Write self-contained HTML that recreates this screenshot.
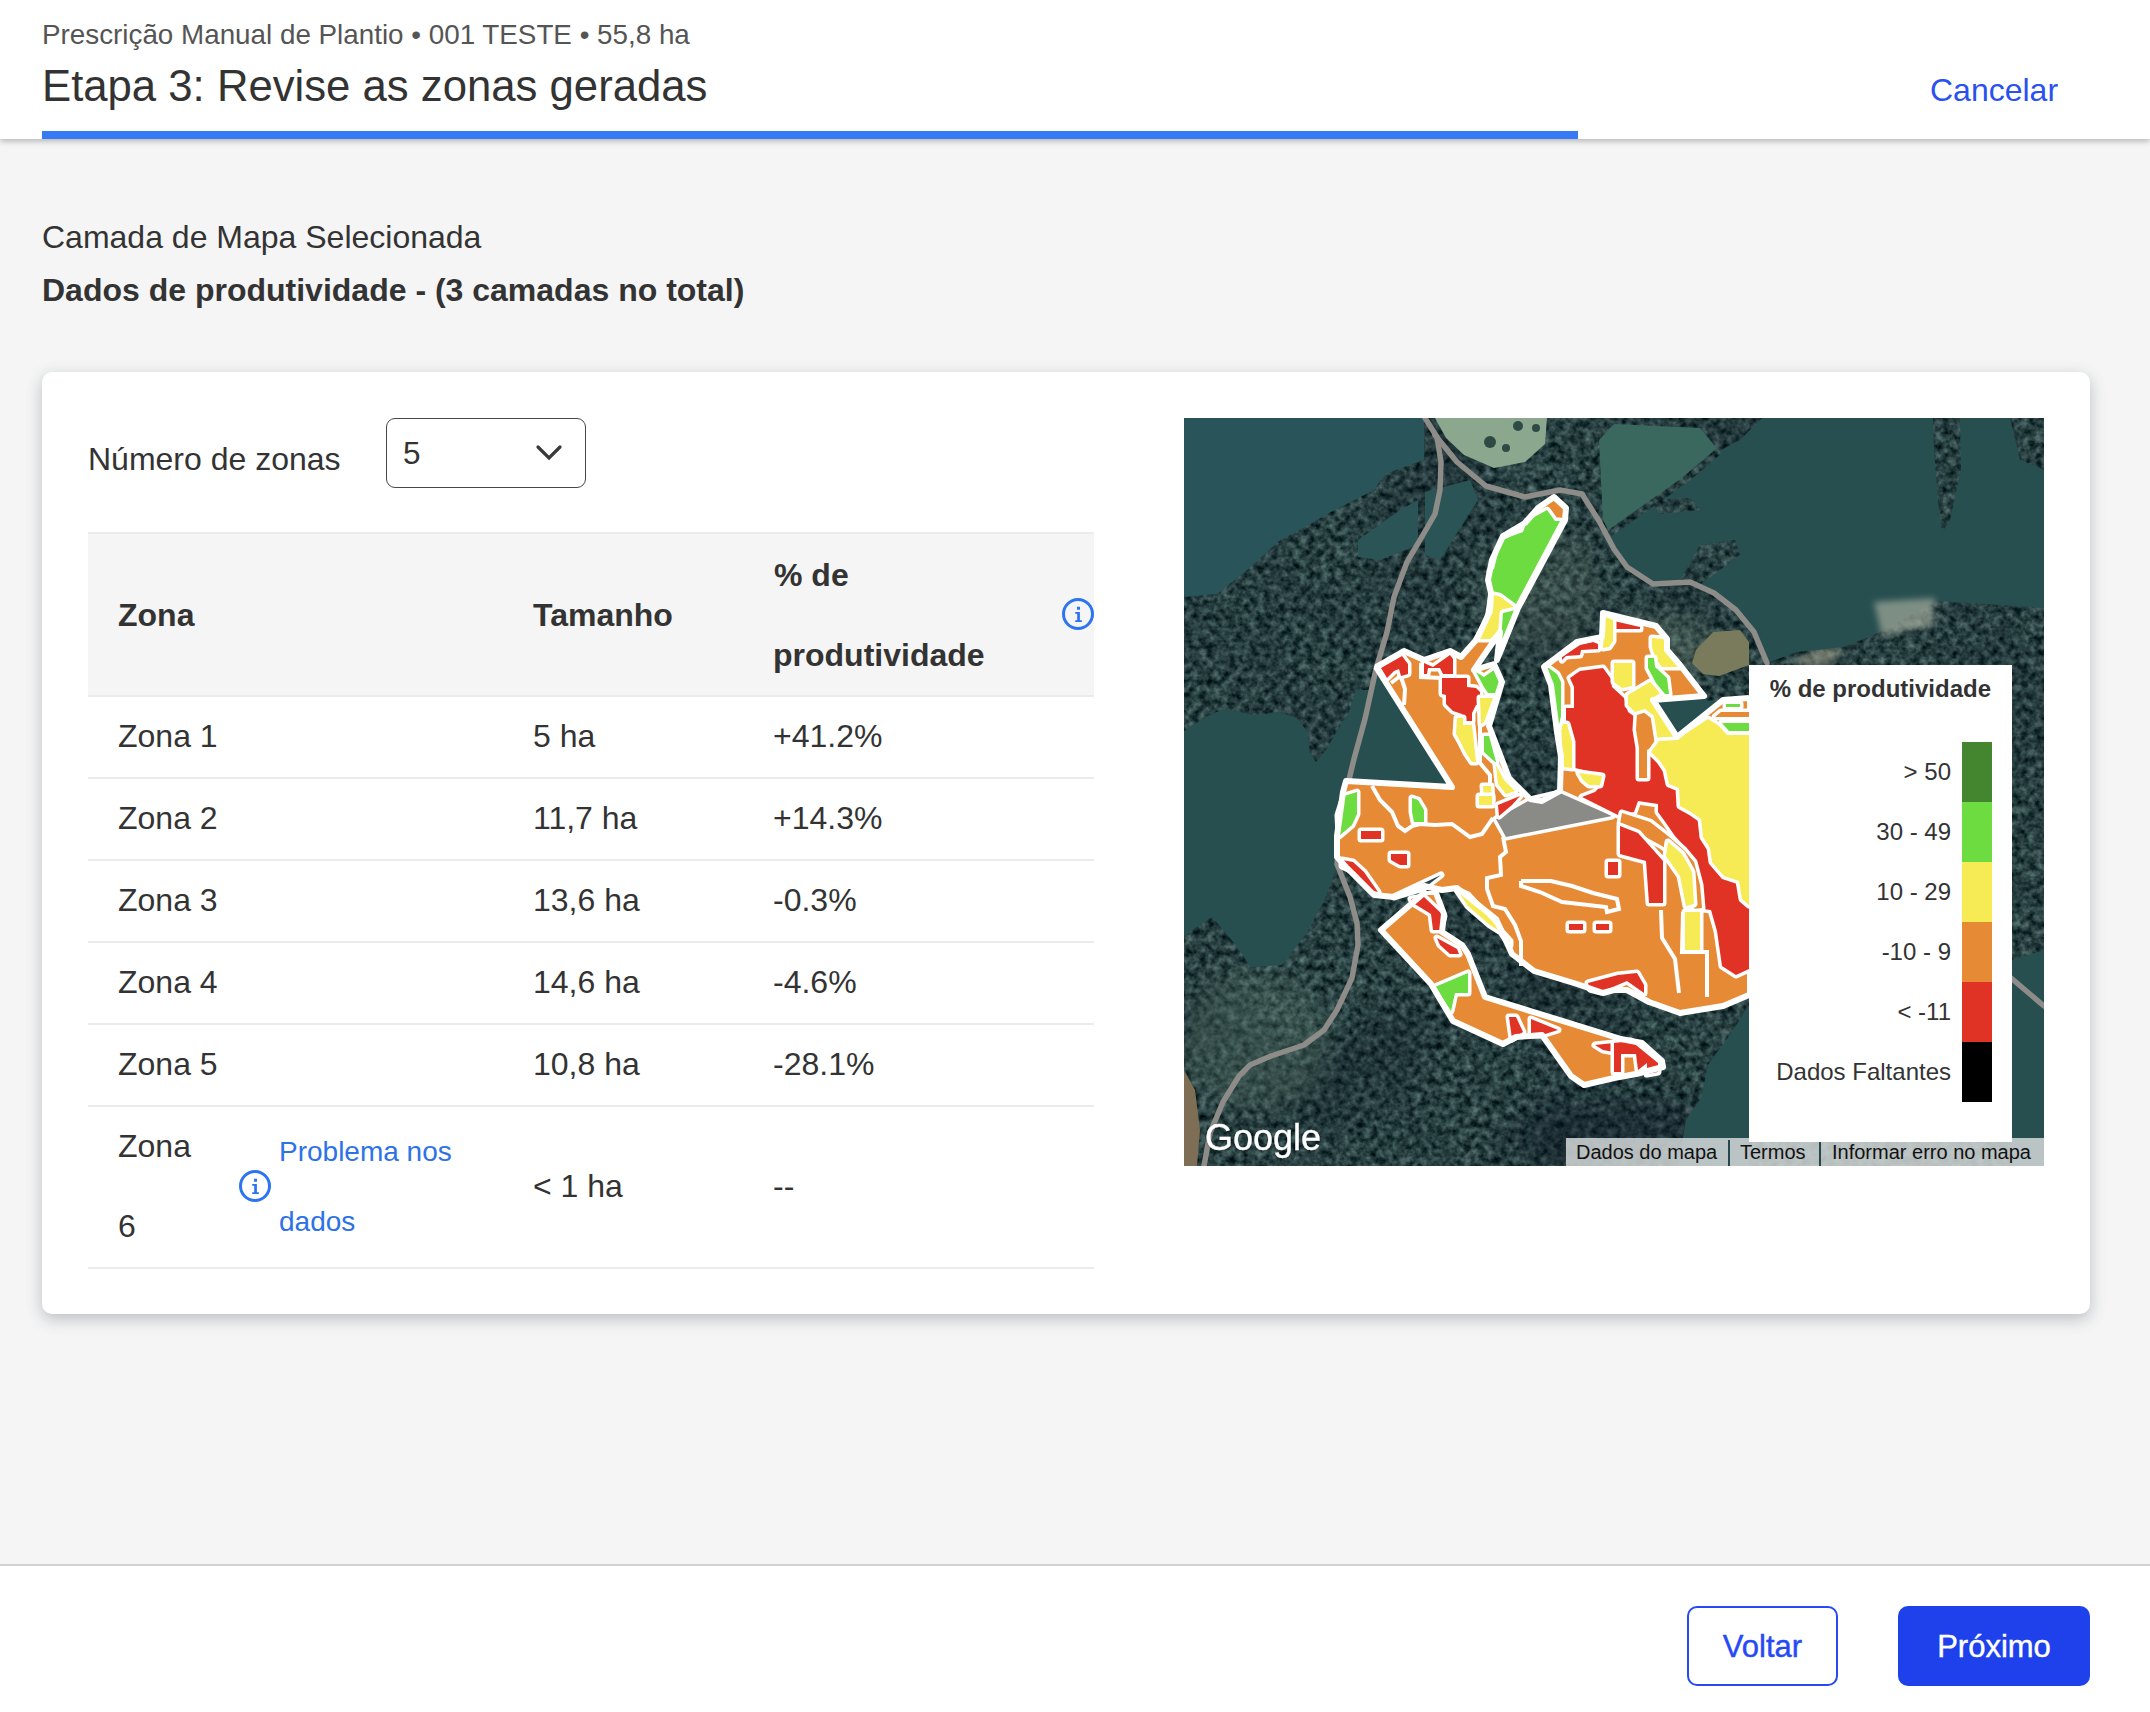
<!DOCTYPE html>
<html><head><meta charset="utf-8">
<style>
*{margin:0;padding:0;box-sizing:border-box}
html,body{width:2150px;height:1712px;overflow:hidden;background:#f5f5f5;font-family:"Liberation Sans",sans-serif;color:#333}
.abs{position:absolute;white-space:nowrap}
#hdr{position:absolute;left:0;top:0;width:2150px;height:139px;background:#fff;box-shadow:0 2px 6px rgba(0,0,0,0.28)}
#bar{position:absolute;left:42px;top:131px;width:1536px;height:8px;background:#367af5}
#card{position:absolute;left:42px;top:372px;width:2048px;height:942px;background:#fff;border-radius:10px;box-shadow:0 5px 16px rgba(50,65,75,0.3)}
.row{position:absolute;left:88px;width:1006px;border-bottom:2px solid #ebebeb}
#footer{position:absolute;left:0;top:1564px;width:2150px;height:148px;background:#fff;border-top:2px solid #d2d2d2}
.btn{position:absolute;top:1606px;height:80px;border-radius:10px;font-size:31px;line-height:78px;text-align:center;-webkit-text-stroke:0.4px currentColor}
</style></head><body>
<div id="hdr">
  <div class="abs" style="left:42px;top:21px;font-size:27.8px;line-height:28px;color:#555">Prescrição Manual de Plantio • 001 TESTE • 55,8 ha</div>
  <div class="abs" style="left:42px;top:64px;font-size:43.7px;line-height:44px;color:#333">Etapa 3: Revise as zonas geradas</div>
  <div class="abs" style="left:1930px;top:74px;font-size:32px;line-height:32px;color:#2a50f0">Cancelar</div>
  <div id="bar"></div>
</div>
<div class="abs" style="left:42px;top:221px;font-size:32px;line-height:32px">Camada de Mapa Selecionada</div>
<div class="abs" style="left:42px;top:274px;font-size:32px;line-height:32px;font-weight:bold">Dados de produtividade - (3 camadas no total)</div>

<div id="card"></div>
<div class="abs" style="left:88px;top:443px;font-size:32px;line-height:32px">Número de zonas</div>
<div class="abs" style="left:386px;top:418px;width:200px;height:70px;border:1.5px solid #484848;border-radius:9px;background:#fff"></div>
<div class="abs" style="left:403px;top:438px;font-size:31.5px;line-height:31px">5</div>
<svg class="abs" style="left:530px;top:438px" width="40" height="30" viewBox="0 0 40 30"><path d="M8 9 L19 20 L30 9" fill="none" stroke="#3a3a3a" stroke-width="3.2" stroke-linecap="round"/></svg>

<!-- table -->
<div class="row" style="top:532px;height:165px;background:#f5f5f5;border-top:2px solid #ebebeb"></div>
<div class="row" style="top:697px;height:82px"></div>
<div class="row" style="top:779px;height:82px"></div>
<div class="row" style="top:861px;height:82px"></div>
<div class="row" style="top:943px;height:82px"></div>
<div class="row" style="top:1025px;height:82px"></div>
<div class="row" style="top:1107px;height:162px"></div>


<!-- table text -->
<div class="abs" style="left:118px;top:599px;font-size:32px;line-height:32px;font-weight:bold">Zona</div>
<div class="abs" style="left:533px;top:599px;font-size:32px;line-height:32px;font-weight:bold">Tamanho</div>
<div class="abs" style="left:774px;top:559px;font-size:32px;line-height:32px;font-weight:bold">% de</div>
<div class="abs" style="left:773px;top:639px;font-size:32px;line-height:32px;font-weight:bold">produtividade</div>
<svg class="abs" style="left:1062px;top:598px" width="32" height="32" viewBox="0 0 32 32"><circle cx="16" cy="16" r="14.5" fill="none" stroke="#2d74f0" stroke-width="3"/><path d="M15 8.8h3v3h-3z M13.2 14h4.7v8.3h2v1.7h-6.7v-1.7h2v-6.6h-2z" fill="#2d74f0"/></svg>
<div class="abs" style="left:118px;top:720px;font-size:32px;line-height:32px">Zona 1</div>
<div class="abs" style="left:533px;top:720px;font-size:32px;line-height:32px">5 ha</div>
<div class="abs" style="left:773px;top:720px;font-size:32px;line-height:32px">+41.2%</div>
<div class="abs" style="left:118px;top:802px;font-size:32px;line-height:32px">Zona 2</div>
<div class="abs" style="left:533px;top:802px;font-size:32px;line-height:32px">11,7 ha</div>
<div class="abs" style="left:773px;top:802px;font-size:32px;line-height:32px">+14.3%</div>
<div class="abs" style="left:118px;top:884px;font-size:32px;line-height:32px">Zona 3</div>
<div class="abs" style="left:533px;top:884px;font-size:32px;line-height:32px">13,6 ha</div>
<div class="abs" style="left:773px;top:884px;font-size:32px;line-height:32px">-0.3%</div>
<div class="abs" style="left:118px;top:966px;font-size:32px;line-height:32px">Zona 4</div>
<div class="abs" style="left:533px;top:966px;font-size:32px;line-height:32px">14,6 ha</div>
<div class="abs" style="left:773px;top:966px;font-size:32px;line-height:32px">-4.6%</div>
<div class="abs" style="left:118px;top:1048px;font-size:32px;line-height:32px">Zona 5</div>
<div class="abs" style="left:533px;top:1048px;font-size:32px;line-height:32px">10,8 ha</div>
<div class="abs" style="left:773px;top:1048px;font-size:32px;line-height:32px">-28.1%</div>
<div class="abs" style="left:118px;top:1130px;font-size:32px;line-height:32px">Zona</div>
<div class="abs" style="left:118px;top:1210px;font-size:32px;line-height:32px">6</div>
<svg class="abs" style="left:239px;top:1170px" width="32" height="32" viewBox="0 0 32 32"><circle cx="16" cy="16" r="14.5" fill="none" stroke="#2d74f0" stroke-width="3"/><path d="M15 8.8h3v3h-3z M13.2 14h4.7v8.3h2v1.7h-6.7v-1.7h2v-6.6h-2z" fill="#2d74f0"/></svg>
<div class="abs" style="left:279px;top:1138px;font-size:28px;line-height:28px;color:#2d72e6">Problema nos</div>
<div class="abs" style="left:279px;top:1208px;font-size:28px;line-height:28px;color:#2d72e6">dados</div>
<div class="abs" style="left:533px;top:1170px;font-size:32px;line-height:32px">&lt; 1 ha</div>
<div class="abs" style="left:773px;top:1170px;font-size:32px;line-height:32px">--</div>

<!--MAP-->
<svg class="abs" style="left:1184px;top:418px" width="860" height="748" viewBox="1184 418 860 748">
<defs>
<filter id="noise" x="0" y="0" width="100%" height="100%" color-interpolation-filters="sRGB">
<feTurbulence type="fractalNoise" baseFrequency="0.14" numOctaves="3" seed="7"/>
<feColorMatrix type="matrix" values="0.52 0 0 0 -0.1  0.57 0 0 0 -0.035  0.55 0 0 0 -0.02  0 0 0 0 1"/>
</filter>
<filter id="fnoise" x="0" y="0" width="100%" height="100%" color-interpolation-filters="sRGB">
<feTurbulence type="fractalNoise" baseFrequency="0.02 0.3" numOctaves="2" seed="11"/>
<feColorMatrix type="matrix" values="0.12 0 0 0 0.105  0.14 0 0 0 0.26  0.14 0 0 0 0.29  0 0 0 0 1"/>
</filter>
<filter id="big" x="0" y="0" width="100%" height="100%" color-interpolation-filters="sRGB">
<feTurbulence type="fractalNoise" baseFrequency="0.008" numOctaves="2" seed="5"/>
<feColorMatrix type="matrix" values="0 0 0 0 0.06  0 0 0 0 0.1  0 0 0 0 0.14  2.2 0 0 0 -0.95"/>
</filter>
<filter id="ff" filterUnits="userSpaceOnUse" x="1184" y="418" width="860" height="748" color-interpolation-filters="sRGB">
<feTurbulence type="fractalNoise" baseFrequency="0.14" numOctaves="3" seed="7"/>
<feColorMatrix type="matrix" values="0.52 0 0 0 -0.1  0.57 0 0 0 -0.035  0.55 0 0 0 -0.02  0 0 0 0 1"/>
<feComposite in2="SourceAlpha" operator="in"/>
</filter>
<filter id="blur8" x="-50%" y="-50%" width="200%" height="200%"><feGaussianBlur stdDeviation="12"/></filter>
<filter id="blur3" x="-50%" y="-50%" width="200%" height="200%"><feGaussianBlur stdDeviation="3"/></filter>
<filter id="gsh" x="-10%" y="-30%" width="120%" height="160%"><feDropShadow dx="0" dy="0.5" stdDeviation="1" flood-color="#000" flood-opacity="0.4"/></filter>
</defs>
<!-- forest base -->
<rect x="1184" y="418" width="860" height="748" fill="#2a4044"/>
<rect x="1184" y="418" width="860" height="748" filter="url(#noise)"/>
<rect x="1184" y="418" width="860" height="748" filter="url(#big)" opacity="0.35"/>
<!-- tone overlays -->
<ellipse cx="1255" cy="1040" rx="75" ry="70" fill="#6a8a78" opacity="0.28" filter="url(#blur8)"/>
<ellipse cx="1540" cy="590" rx="60" ry="60" fill="#7d8f7c" opacity="0.2" filter="url(#blur8)"/>
<ellipse cx="1660" cy="650" rx="55" ry="35" fill="#7d8f7c" opacity="0.3" filter="url(#blur8)"/>
<ellipse cx="1625" cy="1135" rx="95" ry="40" fill="#0c1624" opacity="0.35" filter="url(#blur8)"/>
<path d="M1795 660L1820 648L1843 650L1830 664L1800 666Z" fill="#a3a28c" opacity="0.6" filter="url(#blur3)"/>
<!-- fields -->
<g fill="#284f50">
<path fill="#295459" d="M1184 418H1424V460L1385 474L1374 490L1329 513L1307 526L1279 541L1245 572L1217 594L1184 597Z"/>
<path d="M1184 731L1204 718L1223 709L1255 715L1279 712L1297 718L1307 731L1310 753L1316 762L1326 750L1338 729L1348 714L1356 690L1372 690L1376 669L1365 719L1354 759L1346 792L1337 868L1324 901L1306 934L1282 965L1250 967L1239 949L1212 917L1184 936Z"/>
<path d="M1368 705L1376 667L1452 787L1350 782Z"/>
<path d="M1604 540L1610 533L1685 480L1719 451L1740 440L1762 418H2044V608L1985 604L1937 601L1872 636L1843 647L1797 652L1767 663L1754 632L1736 610L1714 593L1690 582L1653 584L1627 567L1612 550Z"/>

<path d="M1651 698L1721 701L1676 738Z"/>
<path d="M1749 1005L1732 1032L1708 1065L1701 1098L1686 1120L1678 1166H1749Z"/>
<path d="M2011 960L2044 950V1166H2011Z"/>
<path d="M1358 540L1400 510L1418 500L1418 545L1380 560L1358 557Z" fill="#2b5456"/>
<path d="M1425 492L1470 480L1478 500L1440 560L1425 555Z" fill="#2b5456"/>
</g>
<path d="M1599 440L1614 424L1700 428L1719 451L1685 480L1610 533L1603 520Z" fill="#3a675e"/>
<path d="M1610 533L1685 480L1719 451" fill="none" stroke="#000" stroke-width="7" filter="url(#ff)"/>

<path d="M1874 602L1935 598L1932 626L1882 636Z" fill="#9aa596" opacity="0.75" filter="url(#blur3)"/>
<!-- forest islands -->
<g fill="#000" filter="url(#ff)">
<path d="M1933 418H1960L1961 470L1950 520L1942 532L1938 500L1934 450Z"/>
<path d="M1680 580L1700 545L1735 540L1740 555L1700 585Z"/>
<path d="M1650 500L1690 498L1700 510L1660 514Z"/>
<path d="M2010 418H2044V470L2020 460Z"/>
</g>
<!-- pasture -->
<path d="M1435 418H1547L1545 444L1525 462L1494 468L1464 455L1446 438Z" fill="#8ba78d"/>
<g fill="#2d4a45"><circle cx="1490" cy="442" r="6"/><circle cx="1518" cy="426" r="5"/><circle cx="1536" cy="428" r="4"/><circle cx="1506" cy="448" r="4"/></g>
<path d="M1184 1070L1195 1090L1200 1130L1197 1166H1184Z" fill="#7d6e55"/>
<!-- pond -->
<path d="M1696 650L1713 632L1740 630L1749 642L1749 665L1719 676L1703 674L1692 663Z" fill="#7a7a5c"/>
<!-- roads -->
<g fill="none" stroke="#8d8c88" stroke-width="5.5" stroke-linejoin="round" stroke-linecap="round">
<path d="M1425 418L1437 437L1441 462L1440 490L1435 514L1420 540L1407 562L1394 597L1387 632L1376 669L1365 719L1354 759L1346 792L1337 864L1350 897L1357 923L1358 945L1352 978L1337 1010L1324 1030L1304 1045L1271 1056L1250 1065L1239 1076L1223 1102L1210 1133L1204 1166"/>
<path d="M1435 435L1457 462L1486 486L1525 497L1560 490L1582 494L1599 521L1614 549L1627 567L1653 584L1690 582L1714 593L1736 610L1754 632L1767 663"/>
<path d="M2011 978L2044 1006"/>
</g>
<!-- zones -->
<g stroke="#fff" stroke-width="4" stroke-linejoin="round">
<path fill="#e68a35" d="M1376 667L1404 651L1424 660L1450 651L1461 657L1477 639L1490 611L1491 593L1488 580L1492 560L1503 536L1525 523L1538 508L1554 497L1566 508L1565 520L1518 608L1497 660L1500 632L1478 664L1474 670L1494 664L1502 682L1489 726L1509 778L1530 799L1542 801L1560 791L1561 757L1557 732L1551 685L1544 667L1577 642L1602 637L1603 613L1656 626L1667 639L1667 650L1680 665L1704 696L1653 700L1677 737L1723 700L1749 698L1749 995L1723 1006L1680 1013L1649 1002L1627 990L1614 990L1603 993L1577 984L1534 971L1512 954L1496 919L1457 888L1442 890L1424 886L1411 890L1394 897L1374 895L1346 867L1337 857L1337 836L1343 792L1346 781L1452 787Z"/>
<path fill="#e68a35" d="M1424 893L1381 930L1431 984L1453 1021L1503 1044L1516 1037L1542 1035L1571 1076L1584 1085L1614 1078L1636 1074L1663 1067L1662 1061L1642 1043L1621 1039L1485 997L1468 954L1462 945L1442 932L1444 914L1436 893Z"/>
</g>
<g stroke="#fff" stroke-width="7" stroke-linejoin="round" paint-order="stroke">
<!-- grey wedge -->
<path fill="#8a8b86" d="M1496 819L1530 800L1560 793L1612 816L1506 837Z"/>
<!-- reds -->
<g fill="#e03325">
<path d="M1381 668L1402 656L1408 664L1408 674L1401 676L1399 669L1394 671L1387 678Z"/>
<path d="M1424 663L1433 667L1450 655L1453 659L1453 674L1443 674L1440 668L1428 668L1427 674L1424 674Z"/>
<path d="M1442 678L1467 678L1467 687L1476 688L1480 692L1480 705L1476 705L1472 713L1472 721L1462 721L1462 714L1453 711L1446 704L1446 695L1442 694Z"/>
<path d="M1614 621L1640 627L1640 629L1614 629Z"/>
<path d="M1562 657L1580 645L1593 642L1598 644L1598 649L1581 650L1580 655L1566 656L1562 660Z"/>
<path d="M1570 678L1580 671L1603 668L1611 679L1612 687L1624 698L1628 712L1635 717L1640 740L1650 752L1660 761L1666 770L1669 784L1679 788L1680 806L1691 812L1701 819L1703 837L1710 848L1712 862L1724 876L1739 881L1742 899L1749 905L1749 969L1736 975L1722 966L1717 931L1711 910L1703 909L1701 882L1696 860L1686 848L1675 836L1666 823L1658 812L1658 804L1638 801L1634 812L1618 815L1582 797L1595 792L1603 784L1600 774L1575 768L1573 747L1566 721L1566 708L1574 708L1574 687Z"/>
<path d="M1498 805L1520 796L1512 805L1499 816Z"/>
<path d="M1361 831H1381V839H1361Z"/>
<path d="M1391 854H1407V865H1400L1391 860Z"/>
<path d="M1342 860L1353 862L1364 872L1378 892L1370 890L1355 872L1342 866Z"/>
<path d="M1608 862H1618V875H1608Z"/>
<path d="M1569 924H1583V930H1569Z"/>
<path d="M1596 924H1609V930H1596Z"/>
<path d="M1588 983L1618 975L1637 973L1644 985L1644 993L1627 981L1601 992L1590 989Z"/>
<path d="M1411 899L1424 897L1444 916L1440 930L1433 930L1431 914L1413 903Z"/>
<path d="M1437 938L1457 949L1459 954L1450 954L1440 945Z"/>
<path d="M1509 1017L1516 1017L1523 1032L1512 1039Z"/>
<path d="M1531 1019L1558 1030L1542 1035L1531 1035Z"/>
<path d="M1595 1045L1614 1043L1614 1052L1603 1050Z"/>
<path d="M1614 1043L1631 1041L1658 1063L1658 1072L1647 1074L1647 1063L1638 1070L1636 1054L1621 1054L1621 1072L1614 1072Z"/>
</g>
<!-- orange on red -->
<g fill="#e68a35">
<path d="M1637 712L1655 714L1657 746L1647 750L1647 778L1639 778L1639 748L1636 730Z"/>
<path d="M1622 813L1650 822L1668 836L1684 850L1694 862L1700 885L1702 908L1694 910L1690 880L1678 858L1662 846L1640 834L1620 824Z"/>
</g>
<path fill="#e03325" d="M1620 826L1638 833L1663 861L1663 903L1649 903L1646 861L1620 854Z"/>
<!-- yellows -->
<g fill="#f6eb55">
<path d="M1492 593L1516 599L1514 610L1501 610L1501 628L1490 639L1477 639L1488 619L1490 606Z"/>
<path d="M1480 698L1493 698L1484 722L1481 724Z"/>
<path d="M1457 718L1463 718L1463 725L1472 725L1476 762L1472 762L1466 753L1460 741L1456 734Z"/>
<path d="M1483 786L1491 786L1492 800L1484 800Z"/>
<path d="M1496 765L1504 780L1515 791L1506 794L1498 784Z"/>
<path d="M1605 617L1613 620L1613 641L1609 647L1603 648Z"/>
<path d="M1652 638L1664 639L1666 652L1679 667L1662 667L1656 659L1652 647Z"/>
<path d="M1614 663L1632 663L1632 686L1622 688L1614 682Z"/>
<path d="M1628 695L1650 682L1662 692L1651 699L1676 740L1658 742L1654 716L1645 709L1635 712L1628 705Z"/>
<path d="M1659 741L1676 740L1708 719L1719 726L1727 735L1749 735L1749 905L1742 899L1739 881L1724 876L1712 862L1710 848L1703 837L1701 819L1691 812L1680 806L1679 788L1669 784L1666 770L1660 761L1651 752Z"/>
<path d="M1561 724L1567 724L1572 742L1572 768L1564 767L1562 745Z"/>
<path d="M1579 773L1602 776L1600 785L1589 785L1583 780Z"/>
<path d="M1668 842L1682 854L1692 872L1694 904L1686 906L1680 876L1666 856Z"/>
<path d="M1685 912H1700V950H1685Z"/>
<path d="M1457 890L1468 895L1490 919L1510 941L1510 945L1501 932L1490 925L1468 906Z"/>
<path d="M1479 796H1492V805H1479Z"/>
</g>
<!-- greens -->
<g fill="#6ddc40">
<path d="M1527 521L1547 510L1555 521L1560 521L1516 604L1501 593L1492 591L1490 571L1494 569L1499 549L1503 540L1512 536L1523 532Z"/>
<path d="M1503 613L1516 610L1500 650L1502 627Z"/>
<path d="M1476 672L1484 677L1494 670L1499 681L1495 693L1488 693L1484 687Z"/>
<path d="M1484 736L1489 736L1496 762L1495 762L1484 752Z"/>
<path d="M1546 666L1557 674L1561 682L1561 716L1558 729L1554 689Z"/>
<path d="M1648 658L1654 658L1655 667L1667 678L1669 694L1665 694L1656 683L1648 668Z"/>
<path d="M1726 704H1740V707H1726Z"/>
<path d="M1722 723H1749V731H1729Z"/>
<path d="M1344 796L1357 792L1357 814L1352 825L1339 836L1338 815Z"/>
<path d="M1412 798L1418 800L1424 810L1424 822L1414 822L1412 812Z"/>
<path d="M1435 987L1468 973L1468 993L1455 993L1451 1011Z"/>
</g>
<!-- orange stripes near legend -->
<path fill="#e68a35" d="M1715 717L1721 712H1749V717Z"/>
<!-- dark sliver -->
<path fill="#2a464d" d="M1394 897L1441 875L1424 888Z"/>
</g>
<!-- internal white lines -->
<g fill="none" stroke="#fff" stroke-width="4" stroke-linejoin="miter">
<polyline points="1372,786 1380,800 1392,812 1398,826 1405,831 1412,826 1420,824 1435,825 1452,824 1470,837 1482,834 1493,818"/>
<polyline points="1503,837 1506,852 1500,857 1501,875 1487,878 1487,889 1493,906 1505,909 1515,925 1521,941 1521,966"/>
<polyline points="1521,881 1551,881 1572,886 1593,893 1617,899 1619,909 1607,912 1606,907 1562,902 1540,892 1521,886 1521,881"/>
<polyline points="1661,910 1662,938 1675,959 1679,993"/>
<polyline points="1683,912 1682,952 1707,952 1707,997"/>
<polyline points="1401,677 1405,689 1404,705"/>
<polyline points="1391,683 1399,677"/>
<polyline points="1421,663 1421,677 1442,678"/>
<polyline points="1480,724 1480,763 1490,775 1490,786"/>
</g>
<!-- outer white outline again -->
<g fill="none" stroke="#fff" stroke-width="6" stroke-linejoin="round">
<path d="M1376 667L1404 651L1424 660L1450 651L1461 657L1477 639L1490 611L1491 593L1488 580L1492 560L1503 536L1525 523L1538 508L1554 497L1566 508L1565 520L1518 608L1497 660L1500 632L1478 664L1474 670L1494 664L1502 682L1489 726L1509 778L1530 799L1542 801L1560 791L1561 757L1557 732L1551 685L1544 667L1577 642L1602 637L1603 613L1656 626L1667 639L1667 650L1680 665L1704 696L1653 700L1677 737L1723 700L1749 698M1749 995L1723 1006L1680 1013L1649 1002L1627 990L1614 990L1603 993L1577 984L1534 971L1512 954L1496 919L1457 888L1442 890L1424 886L1411 890L1394 897L1374 895L1346 867L1337 857L1337 836L1343 792L1346 781L1452 787L1376 667"/>
<path d="M1424 893L1381 930L1431 984L1453 1021L1503 1044L1516 1037L1542 1035L1571 1076L1584 1085L1614 1078L1636 1074L1663 1067L1662 1061L1642 1043L1621 1039L1485 997L1468 954L1462 945L1442 932L1444 914L1436 893"/>
</g>
<!-- google logo -->
<text x="1205" y="1150" font-family="Liberation Sans" font-size="36" fill="#fff" stroke="#fff" stroke-width="0.3" filter="url(#gsh)">Google</text>
<!-- attribution -->
<rect x="1566" y="1138" width="478" height="28" fill="#d4d8d8" opacity="0.85"/>
<g font-family="Liberation Sans" font-size="20" fill="#111">
<text x="1576" y="1159">Dados do mapa</text>
<text x="1740" y="1159">Termos</text>
<text x="1832" y="1159">Informar erro no mapa</text>
</g>
<rect x="1728" y="1140" width="2" height="26" fill="#23474d"/>
<rect x="1819" y="1140" width="2" height="26" fill="#23474d"/>
<!-- legend -->
<rect x="1749" y="665" width="263" height="477" fill="#fff"/>
<text x="1991" y="697" text-anchor="end" font-family="Liberation Sans" font-weight="bold" font-size="24" fill="#333">% de produtividade</text>
<g font-family="Liberation Sans" font-size="24" fill="#333" text-anchor="end">
<text x="1951" y="780">&gt; 50</text>
<text x="1951" y="840">30 - 49</text>
<text x="1951" y="900">10 - 29</text>
<text x="1951" y="960">-10 - 9</text>
<text x="1951" y="1020">&lt; -11</text>
<text x="1951" y="1080">Dados Faltantes</text>
</g>
<rect x="1962" y="742" width="30" height="60" fill="#43862f"/>
<rect x="1962" y="802" width="30" height="60" fill="#6ddc40"/>
<rect x="1962" y="862" width="30" height="60" fill="#f6eb55"/>
<rect x="1962" y="922" width="30" height="60" fill="#e68a35"/>
<rect x="1962" y="982" width="30" height="60" fill="#e03325"/>
<rect x="1962" y="1042" width="30" height="60" fill="#000"/>
</svg>

<div id="footer"></div>
<div class="btn" style="left:1687px;width:151px;border:2px solid #2648f5;color:#2648f5;background:#fff">Voltar</div>
<div class="btn" style="left:1898px;width:192px;background:#1f41eb;color:#fff;line-height:82px">Próximo</div>
</body></html>
